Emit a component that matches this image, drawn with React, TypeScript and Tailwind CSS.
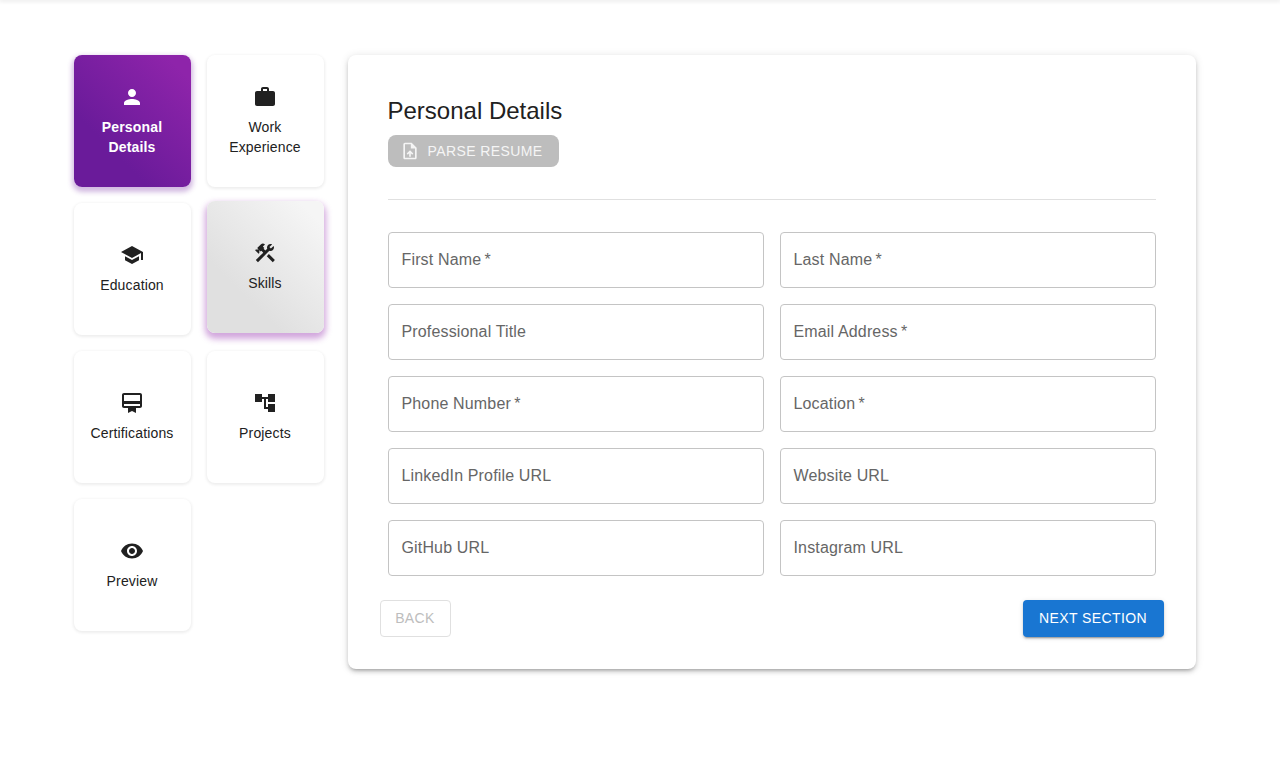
import type { IconType } from 'react-icons';
import {
  MdAccountTree,
  MdCardMembership,
  MdConstruction,
  MdOutlineUploadFile,
  MdPerson,
  MdSchool,
  MdVisibility,
  MdWork,
} from 'react-icons/md';

type CardState = 'active' | 'hover' | 'idle';

interface Section {
  label: string;
  icon: IconType;
  state: CardState;
}

const sections: Section[] = [
  { label: 'Personal Details', icon: MdPerson, state: 'active' },
  { label: 'Work Experience', icon: MdWork, state: 'idle' },
  { label: 'Education', icon: MdSchool, state: 'idle' },
  { label: 'Skills', icon: MdConstruction, state: 'hover' },
  { label: 'Certifications', icon: MdCardMembership, state: 'idle' },
  { label: 'Projects', icon: MdAccountTree, state: 'idle' },
  { label: 'Preview', icon: MdVisibility, state: 'idle' },
];

const cardStyles: Record<CardState, string> = {
  active:
    'bg-linear-[45deg,#6a1b9a_30%,#8e24aa_90%] font-bold text-white shadow-[0_3px_5px_2px_rgba(106,27,154,0.3)]',
  hover:
    '-translate-y-0.5 bg-linear-[45deg,#e0e0e0_30%,#f5f5f5_90%] text-[#212121] shadow-[0_4px_6px_2px_rgba(142,36,170,0.4)]',
  idle: 'bg-white text-[#212121] shadow-[0_1px_3px_1px_rgba(0,0,0,0.07)]',
};

const fields = [
  'First Name *',
  'Last Name *',
  'Professional Title',
  'Email Address *',
  'Phone Number *',
  'Location *',
  'LinkedIn Profile URL',
  'Website URL',
  'GitHub URL',
  'Instagram URL',
];

function SectionCard({ label, icon: Icon, state }: Section) {
  return (
    <button
      type="button"
      className={`flex h-33 flex-col items-center justify-center gap-2 rounded-lg px-3 text-sm leading-5 tracking-[0.15px] ${cardStyles[state]}`}
    >
      <Icon className="size-6 shrink-0" />
      <span>{label}</span>
    </button>
  );
}

function Field({ label }: { label: string }) {
  const required = label.endsWith(' *');
  return (
    <div className="flex h-14 items-center rounded border border-[#c4c4c4] px-[13px] text-base tracking-[0.15px] text-[#666666]">
      <label>
        {required ? label.slice(0, -2) : label}
        {required && <span>&thinsp;*</span>}
      </label>
    </div>
  );
}

export default function App() {
  return (
    <div className="h-[762px] overflow-hidden bg-white font-['Liberation_Sans',Arial,sans-serif]">
      <header className="h-0 shadow-[0_0_4px_1px_rgba(0,0,0,0.14)]" />
      <main className="flex items-start gap-6 pt-[55px] pl-[73.5px]">
        <nav className="grid w-[250px] grid-cols-2 gap-4">
          {sections.map((section) => (
            <SectionCard key={section.label} {...section} />
          ))}
        </nav>

        <section className="h-[614px] w-[848px] rounded-lg bg-white px-10 pt-10 shadow-[0_3px_3px_-2px_rgba(0,0,0,0.2),0_3px_4px_0_rgba(0,0,0,0.14),0_1px_8px_0_rgba(0,0,0,0.12)]">
          <h1 className="text-2xl leading-8 text-[#212121]">Personal Details</h1>
          <button
            type="button"
            disabled
            className="mt-2 flex h-8 w-[171px] items-center rounded-lg bg-[#bdbdbd] pl-3 text-sm tracking-[0.4px] text-[#f5f5f5]"
          >
            <MdOutlineUploadFile className="mr-2 size-5" />
            PARSE RESUME
          </button>
          <hr className="mt-8 mb-8 border-[#e0e0e0]" />
          <div className="grid grid-cols-2 gap-4">
            {fields.map((label) => (
              <Field key={label} label={label} />
            ))}
          </div>
          <div className="-mx-2 mt-6 flex justify-between text-sm tracking-[0.4px]">
            <button
              type="button"
              disabled
              className="h-[37px] w-[71px] rounded border border-[#e0e0e0] pb-0.5 text-[#bdbdbd]"
            >
              BACK
            </button>
            <button
              type="button"
              className="h-[37px] w-[141px] rounded bg-[#1976d2] pb-0.5 text-white shadow-[0_3px_1px_-2px_rgba(0,0,0,0.2),0_2px_2px_0_rgba(0,0,0,0.14),0_1px_5px_0_rgba(0,0,0,0.12)]"
            >
              NEXT SECTION
            </button>
          </div>
        </section>
      </main>
    </div>
  );
}
